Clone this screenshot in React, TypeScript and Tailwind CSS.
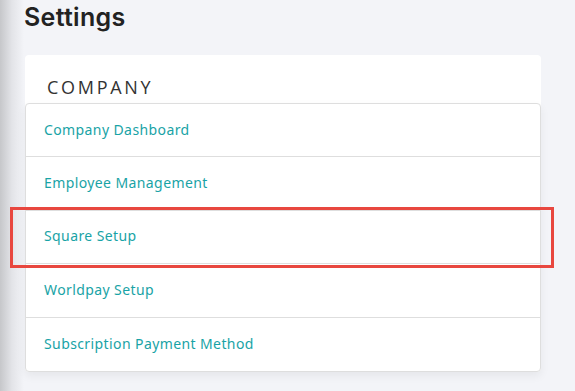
import React from "react";

const items = [
  "Company Dashboard",
  "Employee Management",
  "Square Setup",
  "Worldpay Setup",
  "Subscription Payment Method",
];

export default function App() {
  return (
    <div className="relative flex h-[391px] w-[575px] overflow-hidden bg-[#f3f4f8]">
      <div className="h-full w-[24px] shrink-0 bg-gradient-to-r from-[#c6c7ca] via-[#e3e4e8] to-[#f3f4f8]" />
      <div className="flex w-[517px] flex-col">
        <h1
          className="pt-[2px] text-[25px] font-semibold leading-[30px] tracking-[0.3px] text-[#222]"
          style={{ fontFamily: "Inter, 'Noto Sans', sans-serif" }}
        >
          Settings
        </h1>
        <div className="ml-[1px] mt-[23px] rounded-[4px] bg-white">
          <div
            className="h-[48px] px-[22px] pt-[21px] text-[18px] leading-[22px] tracking-[2.7px] text-[#333]"
            style={{ fontFamily: "'Open Sans', sans-serif" }}
          >
            COMPANY
          </div>
          <ul className="rounded-[4px] border border-[#dedede] bg-white shadow-[0_4px_10px_rgba(0,0,0,0.06)]">
            {items.map((item, i) => (
              <li
                key={item}
                className={`flex h-[53.4px] items-center px-[18px] pb-[2px] text-[14px] tracking-[0.4px] text-[#19a3a6] ${
                  i < items.length - 1 ? "border-b border-[#dedede]" : ""
                }`}
                style={{ fontFamily: "'Noto Sans', sans-serif" }}
              >
                {item}
              </li>
            ))}
          </ul>
        </div>
      </div>
      <div className="pointer-events-none absolute left-[10px] top-[207px] h-[61px] w-[544px] border-[3px] border-[#e8473f]" />
    </div>
  );
}
